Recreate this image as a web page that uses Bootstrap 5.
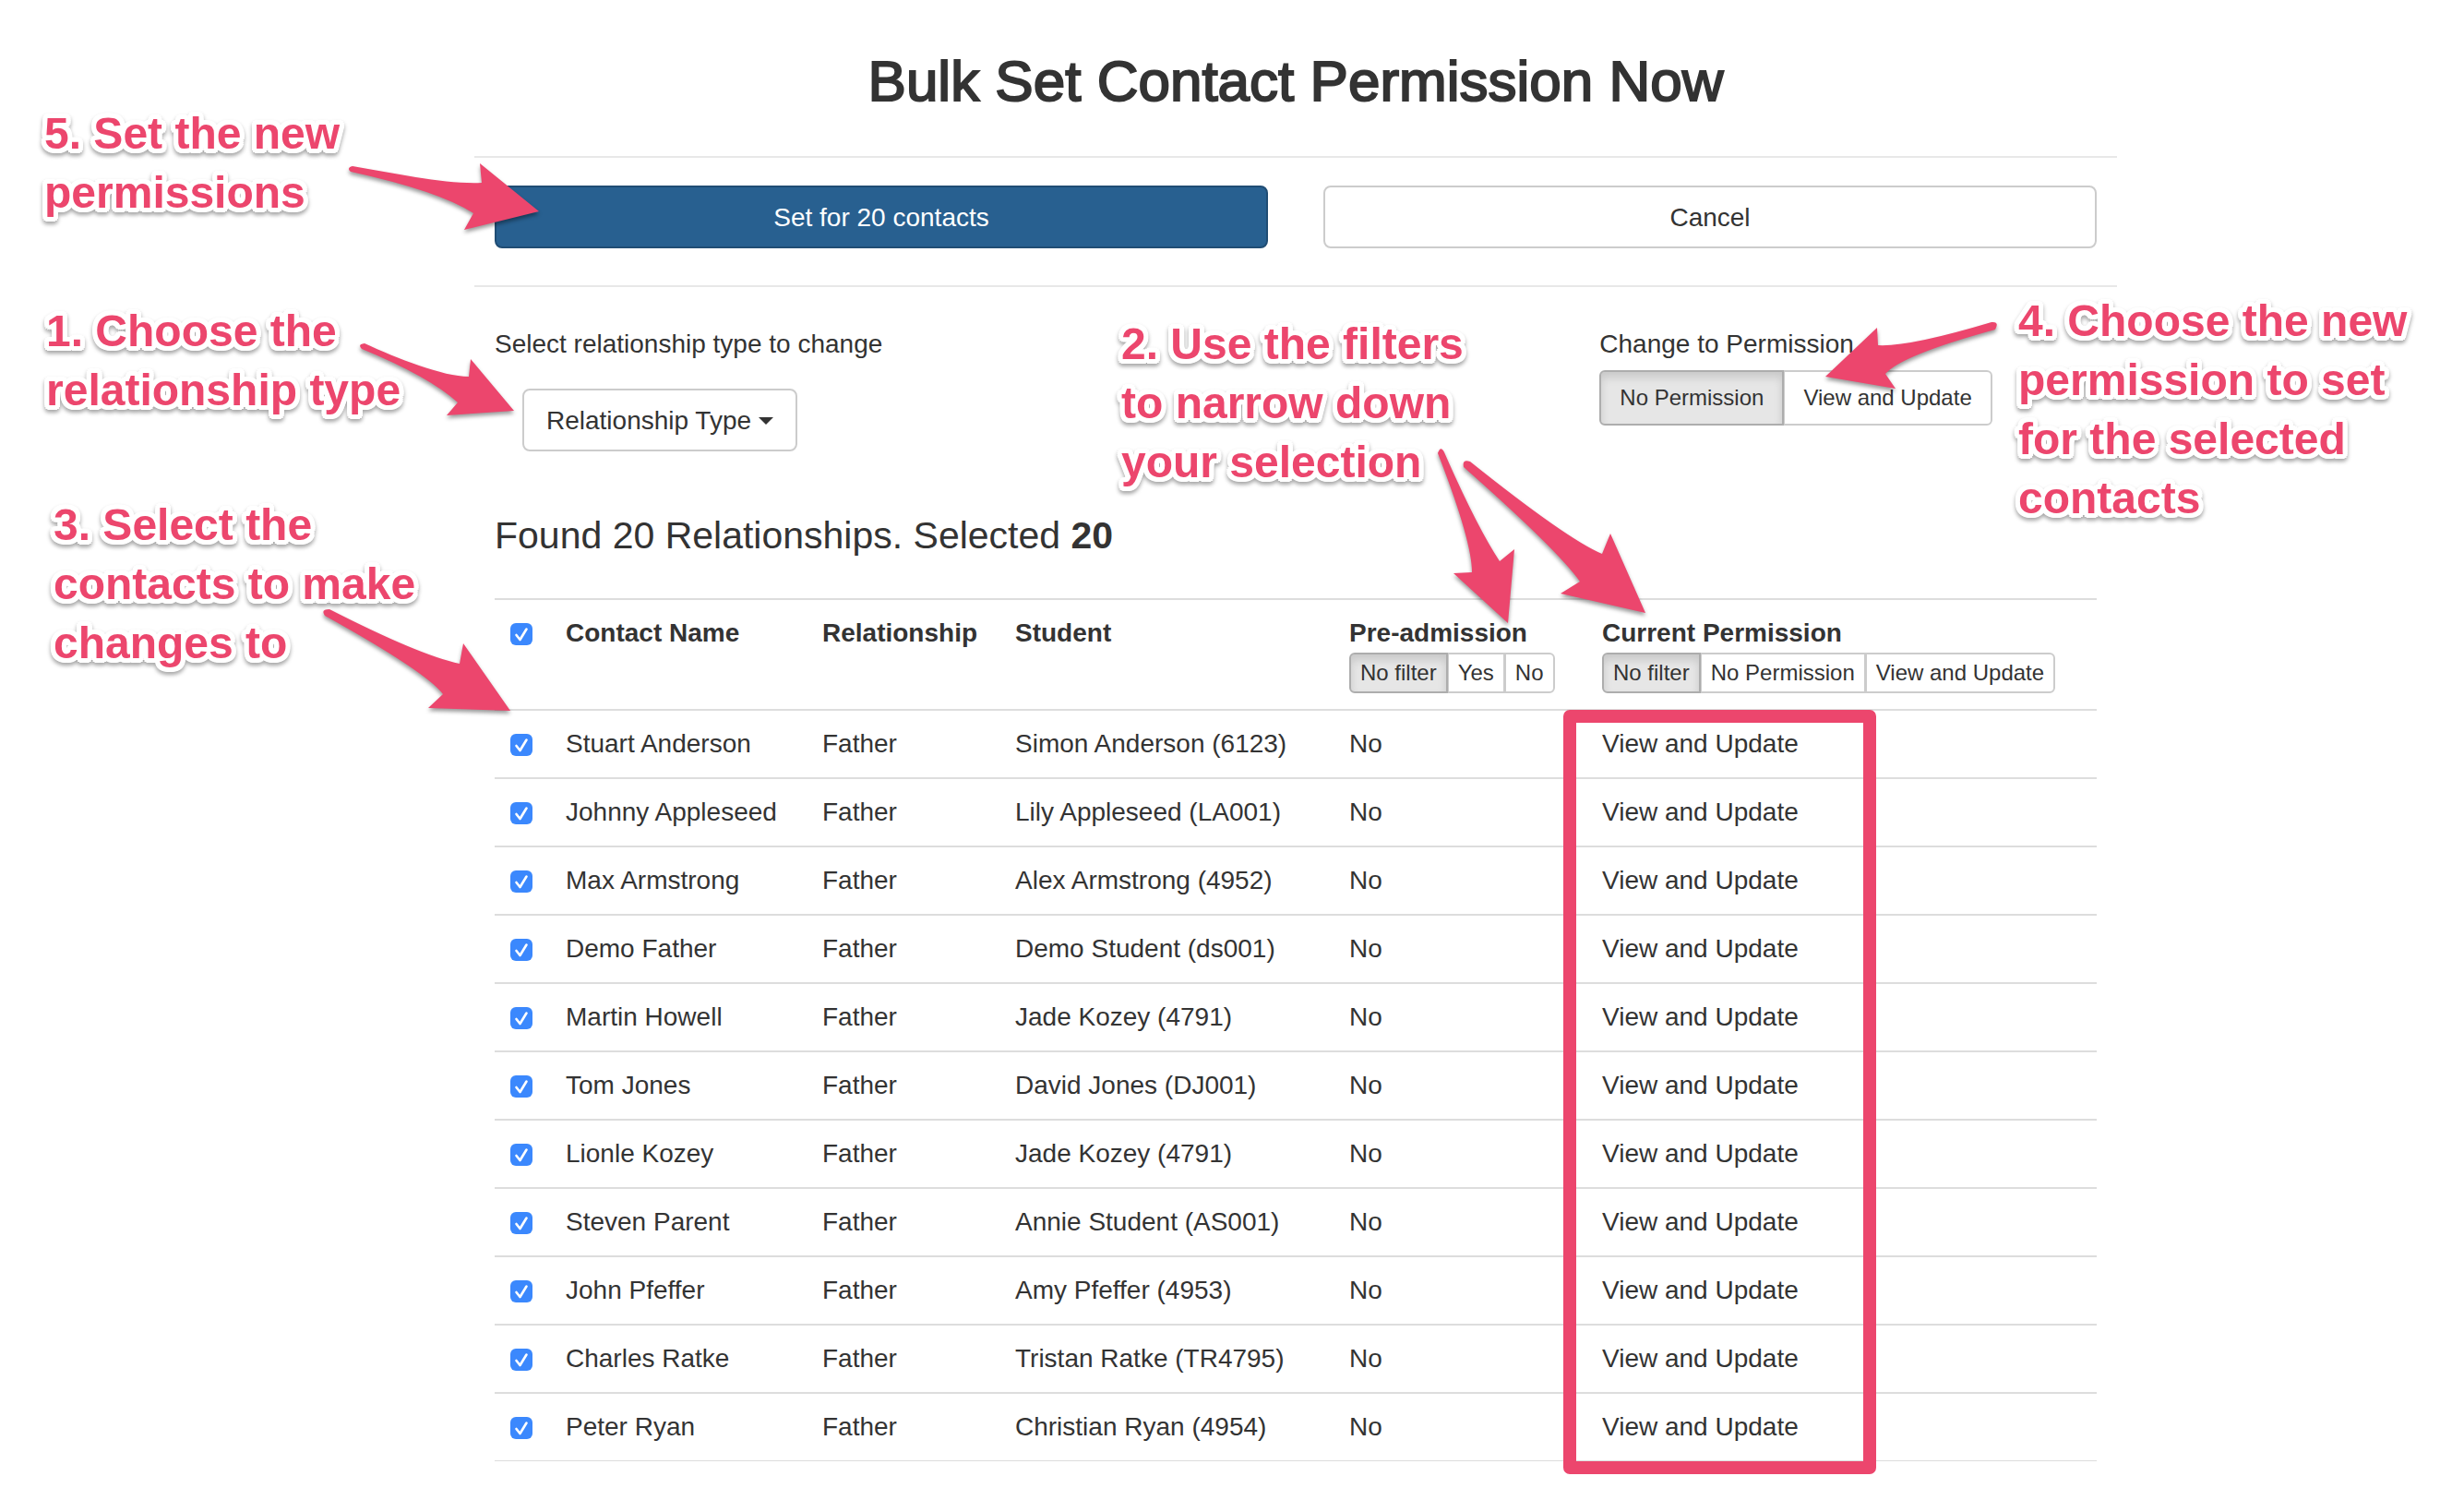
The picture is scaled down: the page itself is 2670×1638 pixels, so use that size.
<!DOCTYPE html>
<html lang="en">
<head>
<meta charset="utf-8">
<meta name="viewport" content="width=device-width, initial-scale=1">
<title>Bulk Set Contact Permission Now</title>
<link href="https://cdn.jsdelivr.net/npm/bootstrap@5.3.0/dist/css/bootstrap.min.css" rel="stylesheet">
<style>
  body { font-family: "Liberation Sans", Arial, sans-serif; font-size: 28px; line-height: 40px; color: #333; background: #fff; }
  .page { padding: 55px 398px 55px 536px; }
  .page-title { font-size: 62px; line-height: 66px; font-weight: 400; -webkit-text-stroke: 2px #333; margin: 0 0 48px; }
  .rule { height: 2px; border: 0; opacity: 1; background: #e8e8e8; margin: 0 -22px; }
  .wide-gutter { --bs-gutter-x: 60px; }
  .actions { padding: 30px 0 40px; }
  .controls { padding: 42px 0 61px; }
  .btn { font-size: 28px; line-height: 40px; padding: 13px 24px 11px; border: 2px solid #ccc; border-radius: 8px; color: #333; background: #fff; }
  .btn-set { background: #286090; border-color: #204d74; color: #fff; }
  .btn-pick { margin: 28px 0 0 30px; }
  .btn-pick::after { border-top: 8px solid; border-left: 8px solid transparent; border-right: 8px solid transparent; margin-left: 8px; vertical-align: 5px; }
  .btn-group > .btn { font-size: 24px; line-height: 36px; padding: 10px 20px; border-radius: 6px; flex: 0 0 auto; }
  .btn-group > .btn:not(:first-child) { margin-left: -2px; }
  .btn-group > .btn.active { background: #e6e6e6; border-color: #adadad; color: #333; box-shadow: inset 0 6px 10px rgba(0,0,0,.125); }
  .set-group { margin-top: 8px; }
  .filter-group { margin: 1px 0; }
  .filter-group > .btn { padding: 2px 10px; }
  .summary { font-size: 41px; line-height: 60px; margin: 0 0 38px; }
  .contacts { table-layout: fixed; margin: 0; border-bottom: 1px solid #ddd; color: #333; --bs-table-color: #333; }
  .contacts > :not(caption) > * > * { padding: 16px; border: 0; border-top: 2px solid #ddd; vertical-align: top; white-space: nowrap; color: #333; }
  .c-check { width: 61px; } .c-name { width: 278px; } .c-rel { width: 209px; } .c-student { width: 362px; } .c-pre { width: 274px; }
  .contacts .form-check-input { display: block; width: 24px; height: 24px; margin: 9px 0 0 1px; border: 0; border-radius: 6px; background-color: #3b88fd; background-size: 24px 24px;
    background-image: url("data:image/svg+xml,%3csvg xmlns='http://www.w3.org/2000/svg' viewBox='0 0 24 24'%3e%3cpath fill='none' stroke='%23fff' stroke-width='2.6' stroke-linecap='round' stroke-linejoin='round' d='M6.5 13l4 5 7-11.500'/%3e%3c/svg%3e"); }
  .note { position: absolute; margin: 0; font-size: 48px; line-height: 64px; font-weight: 700; color: #ec466d; white-space: nowrap; filter: drop-shadow(0 3px 2px rgba(0,0,0,.35));
    text-shadow: 5px 0 #fff, -5px 0 #fff, 0 5px #fff, 0 -5px #fff, 4px 4px #fff, -4px 4px #fff, 4px -4px #fff, -4px -4px #fff, 5px 2px #fff, -5px 2px #fff, 5px -2px #fff, -5px -2px #fff, 2px 5px #fff, -2px 5px #fff, 2px -5px #fff, -2px -5px #fff; }
  .note-5 { left: 48px; top: 113px; }
  .note-1 { left: 50px; top: 327px; }
  .note-3 { left: 58px; top: 537px; }
  .note-2 { left: 1215px; top: 341px; }
  .note-4 { left: 2187px; top: 316px; }
  .arrows { position: absolute; left: 0; top: 0; overflow: visible; pointer-events: none; filter: drop-shadow(0 3px 2px rgba(0,0,0,.4)); }
  .highlight { position: absolute; left: 1694px; top: 769px; width: 339px; height: 828px; border: 14px solid #ec466d; border-radius: 7px; pointer-events: none; }
</style>
</head>
<body class="position-relative">
<main class="page">
  <h1 class="page-title text-center">Bulk Set Contact Permission Now</h1>
  <hr class="rule">
  <div class="actions">
    <div class="row wide-gutter">
      <div class="col-6"><button type="button" class="btn btn-set w-100">Set for 20 contacts</button></div>
      <div class="col-6"><button type="button" class="btn w-100">Cancel</button></div>
    </div>
  </div>
  <hr class="rule">
  <div class="controls">
    <div class="row wide-gutter">
      <div class="col-8">
        <div id="pick-label">Select relationship type to change</div>
        <button type="button" class="btn btn-pick dropdown-toggle" data-bs-toggle="dropdown" aria-describedby="pick-label">Relationship Type</button>
      </div>
      <div class="col-4">
        <div id="set-label">Change to Permission</div>
        <div class="btn-group set-group" role="group" aria-labelledby="set-label">
          <button type="button" class="btn active">No Permission</button>
          <button type="button" class="btn">View and Update</button>
        </div>
      </div>
    </div>
  </div>
  <p class="summary">Found 20 Relationships. Selected <strong>20</strong></p>
  <table class="table contacts">
    <thead>
      <tr>
        <th class="c-check"><input class="form-check-input" type="checkbox" checked aria-label="Select all"></th>
        <th class="c-name">Contact Name</th>
        <th class="c-rel">Relationship</th>
        <th class="c-student">Student</th>
        <th class="c-pre">
          <div>Pre-admission</div>
          <div class="btn-group filter-group d-flex" role="group" aria-label="Pre-admission filter">
            <button type="button" class="btn active">No filter</button>
            <button type="button" class="btn">Yes</button>
            <button type="button" class="btn">No</button>
          </div>
        </th>
        <th>
          <div>Current Permission</div>
          <div class="btn-group filter-group d-flex" role="group" aria-label="Current permission filter">
            <button type="button" class="btn active">No filter</button>
            <button type="button" class="btn">No Permission</button>
            <button type="button" class="btn">View and Update</button>
          </div>
        </th>
      </tr>
    </thead>
    <tbody>
      <tr><td><input class="form-check-input" type="checkbox" checked aria-label="Stuart Anderson"></td><td>Stuart Anderson</td><td>Father</td><td>Simon Anderson (6123)</td><td>No</td><td>View and Update</td></tr>
      <tr><td><input class="form-check-input" type="checkbox" checked aria-label="Johnny Appleseed"></td><td>Johnny Appleseed</td><td>Father</td><td>Lily Appleseed (LA001)</td><td>No</td><td>View and Update</td></tr>
      <tr><td><input class="form-check-input" type="checkbox" checked aria-label="Max Armstrong"></td><td>Max Armstrong</td><td>Father</td><td>Alex Armstrong (4952)</td><td>No</td><td>View and Update</td></tr>
      <tr><td><input class="form-check-input" type="checkbox" checked aria-label="Demo Father"></td><td>Demo Father</td><td>Father</td><td>Demo Student (ds001)</td><td>No</td><td>View and Update</td></tr>
      <tr><td><input class="form-check-input" type="checkbox" checked aria-label="Martin Howell"></td><td>Martin Howell</td><td>Father</td><td>Jade Kozey (4791)</td><td>No</td><td>View and Update</td></tr>
      <tr><td><input class="form-check-input" type="checkbox" checked aria-label="Tom Jones"></td><td>Tom Jones</td><td>Father</td><td>David Jones (DJ001)</td><td>No</td><td>View and Update</td></tr>
      <tr><td><input class="form-check-input" type="checkbox" checked aria-label="Lionle Kozey"></td><td>Lionle Kozey</td><td>Father</td><td>Jade Kozey (4791)</td><td>No</td><td>View and Update</td></tr>
      <tr><td><input class="form-check-input" type="checkbox" checked aria-label="Steven Parent"></td><td>Steven Parent</td><td>Father</td><td>Annie Student (AS001)</td><td>No</td><td>View and Update</td></tr>
      <tr><td><input class="form-check-input" type="checkbox" checked aria-label="John Pfeffer"></td><td>John Pfeffer</td><td>Father</td><td>Amy Pfeffer (4953)</td><td>No</td><td>View and Update</td></tr>
      <tr><td><input class="form-check-input" type="checkbox" checked aria-label="Charles Ratke"></td><td>Charles Ratke</td><td>Father</td><td>Tristan Ratke (TR4795)</td><td>No</td><td>View and Update</td></tr>
      <tr><td><input class="form-check-input" type="checkbox" checked aria-label="Peter Ryan"></td><td>Peter Ryan</td><td>Father</td><td>Christian Ryan (4954)</td><td>No</td><td>View and Update</td></tr>
    </tbody>
  </table>
</main>

<!-- Walkthrough callouts laid over the page -->
<div class="highlight"></div>
<p class="note note-5">5. Set the new<br>permissions</p>
<p class="note note-1">1. Choose the<br>relationship type</p>
<p class="note note-3">3. Select the<br>contacts to make<br>changes to</p>
<p class="note note-2">2. Use the filters<br>to narrow down<br>your selection</p>
<p class="note note-4">4. Choose the new<br>permission to set<br>for the selected<br>contacts</p>
<svg class="arrows" width="1" height="1" fill="#ec466d" aria-hidden="true">
  <path d="M382 180C430 188 485 200 522 198L520 177L584 229L503 249L513 231Q476 207 380 186Q375 182 382 180Z"/>
  <path d="M395 372C430 388 480 408 508 408L510 389L557 445L484 450L496 436Q465 408 392 378Q387 373 395 372Z"/>
  <path d="M2158 349Q2068 376 2035 374L2034 355L1978 408L2054 421L2043 405Q2060 385 2162 357Q2167 348 2158 349Z"/>
  <path d="M357 660Q455 710 498 719L502 697L553 770L464 767L480 752Q462 728 352 667Q347 660 357 660Z"/>
  <path d="M1565 490Q1600 570 1625 608L1641 595L1634 675L1575 621L1595 620Q1595 586 1558 491Q1561 482 1565 490Z"/>
  <path d="M1593 500Q1698 584 1736 600L1745 578L1783 664L1691 643L1712 630Q1688 596 1586 506Q1584 497 1593 500Z"/>
</svg>
<script src="https://cdn.jsdelivr.net/npm/bootstrap@5.3.0/dist/js/bootstrap.bundle.min.js"></script>
</body>
</html>
